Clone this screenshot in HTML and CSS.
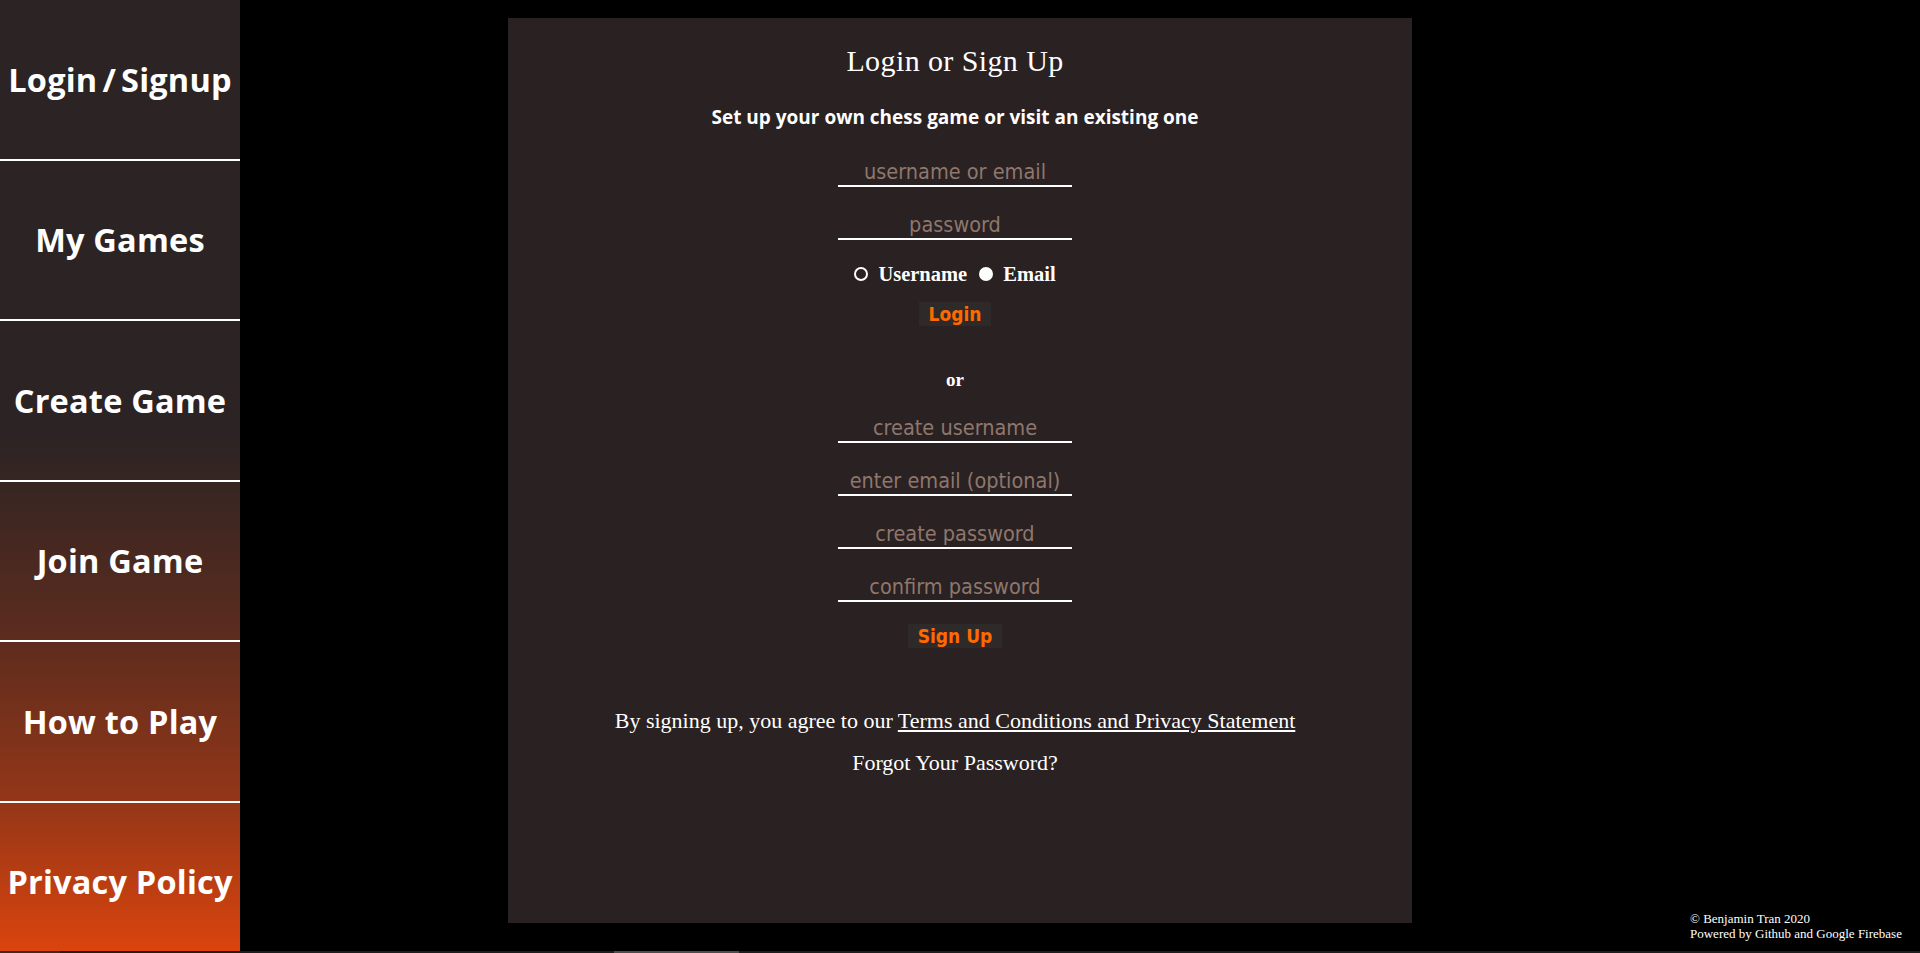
FILE: index.html
```html
<!DOCTYPE html>
<html lang="en">
<head>
<meta charset="utf-8">
<title>Login or Sign Up</title>
<link rel="stylesheet" href="styles.css">
</head>
<body>
<div class="page">
  <nav class="sidebar">
    <a class="nav-item" href="#">Login<span class="slash">/</span>Signup</a>
    <a class="nav-item" href="#">My Games</a>
    <a class="nav-item" href="#">Create Game</a>
    <a class="nav-item" href="#">Join Game</a>
    <a class="nav-item" href="#">How to Play</a>
    <a class="nav-item" href="#">Privacy Policy</a>
  </nav>
  <main class="main">
    <section class="panel">
      <h1 class="title">Login or Sign Up</h1>
      <p class="subtitle">Set up your own chess game or visit an existing one</p>
      <input class="field first" type="text" placeholder="username or email">
      <input class="field" type="password" placeholder="password">
      <div class="radios">
        <label class="radio"><input type="radio" name="mode"><span>Username</span></label>
        <label class="radio"><input type="radio" name="mode" checked><span>Email</span></label>
      </div>
      <button class="btn btn-login">Login</button>
      <p class="or">or</p>
      <input class="field first-signup" type="text" placeholder="create username">
      <input class="field" type="text" placeholder="enter email (optional)">
      <input class="field" type="password" placeholder="create password">
      <input class="field" type="password" placeholder="confirm password">
      <button class="btn btn-signup">Sign Up</button>
      <p class="terms">By signing up, you agree to our <a href="#">Terms and Conditions and Privacy Statement</a></p>
      <p class="forgot">Forgot Your Password?</p>
    </section>
    <footer class="footer">
      <div>© Benjamin Tran 2020</div>
      <div>Powered by Github and Google Firebase</div>
    </footer>
  </main>
</div>
<div class="hscroll"><div class="hscroll-left"></div><div class="hscroll-thumb"></div></div>
</body>
</html>
```

FILE: styles.css
```css
html, body {
  margin: 0;
  padding: 0;
  background: #000;
  height: 953px;
  overflow: hidden;
}

body {
  display: flex;
  flex-direction: column;
  font-family: "Liberation Serif", serif;
  color: #fff;
}

.page {
  height: 951px;
  display: flex;
  flex-direction: row;
}

.sidebar {
  width: 240px;
  flex: 0 0 240px;
  height: 951px;
  overflow: hidden;
  display: flex;
  flex-direction: column;
  background: linear-gradient(to bottom, #2b2324 0%, #2b2324 45%, #5c2c1e 66%, #933618 83%, #e0450c 100%);
  background-size: 100% 963px;
}

.nav-item {
  flex: 0 0 158.5px;
  height: 158.5px;
  border-bottom: 2px solid #fff;
  display: flex;
  align-items: center;
  justify-content: center;
  color: #fff;
  text-decoration: none;
  font-family: "Open Sans", sans-serif;
  font-weight: 700;
  font-size: 32.5px;
  letter-spacing: 0.2px;
  white-space: nowrap;
}

.slash {
  padding: 0 5px;
}

.main {
  flex: 1;
  display: flex;
  flex-direction: row;
  padding-left: 268px;
}

.panel {
  width: 894px;
  height: 905px;
  margin-top: 18px;
  padding-right: 10px;
  background: #2a2122;
  display: flex;
  flex-direction: column;
  align-items: center;
}

.title {
  margin: 25px 0 0;
  font-family: "Liberation Serif", serif;
  font-weight: 400;
  font-size: 30px;
  line-height: 36px;
  letter-spacing: 0.4px;
}

.subtitle {
  margin: 27px 0 0;
  font-family: "Open Sans", sans-serif;
  font-weight: 700;
  font-size: 19px;
  line-height: 22px;
}

.field {
  box-sizing: border-box;
  width: 234px;
  height: 34px;
  margin: 19px 0 0;
  padding: 4px 0 0;
  border: none;
  border-bottom: 2px solid #fff;
  background: transparent;
  outline: none;
  text-align: center;
  color: #fff;
  font-family: "DejaVu Sans Condensed", "DejaVu Sans", sans-serif;
  font-size: 21.5px;
}

.field::placeholder {
  color: #8e776c;
  opacity: 1;
}

.field.first {
  margin-top: 25px;
}

.field.first-signup {
  margin-top: 18px;
}

.radios {
  margin-top: 23px;
  height: 22px;
  display: flex;
  align-items: center;
  gap: 12px;
}

.radio {
  display: flex;
  align-items: center;
  gap: 10px;
  font-family: "Liberation Serif", serif;
  font-weight: 700;
  font-size: 20.5px;
  line-height: 22px;
}

.radio input {
  appearance: none;
  -webkit-appearance: none;
  margin: 0;
  box-sizing: border-box;
  width: 14px;
  height: 14px;
  border: 2px solid #fff;
  border-radius: 50%;
  background: transparent;
}

.radio input:checked {
  background: #fff;
}

.btn {
  border: none;
  background: #2f2a2a;
  color: #ff6a00;
  font-family: "DejaVu Sans Condensed", "DejaVu Sans", sans-serif;
  font-weight: 700;
  font-size: 19px;
  height: 24px;
  line-height: 24px;
  padding: 0 10px;
  cursor: pointer;
}

.btn-login {
  margin-top: 17px;
}

.or {
  margin: 43px 0 0;
  font-family: "Liberation Serif", serif;
  font-weight: 700;
  font-size: 19px;
  line-height: 22px;
}

.btn-signup {
  margin-top: 22px;
}

.terms {
  margin: 61px 0 0;
  font-family: "Liberation Serif", serif;
  font-size: 22px;
  line-height: 24px;
}

.terms a {
  color: #fff;
  text-decoration: underline;
}

.forgot {
  margin: 18px 0 0;
  font-family: "Liberation Serif", serif;
  font-size: 22px;
  line-height: 24px;
}

.footer {
  align-self: flex-end;
  margin: 0 0 10px 278px;
  font-family: "Liberation Serif", serif;
  font-size: 13px;
  line-height: 15px;
  white-space: nowrap;
}

.hscroll {
  height: 2px;
  background: #1e1e1e;
  display: flex;
}

.hscroll-left {
  width: 60px;
  background: #3a2a22;
}

.hscroll-thumb {
  margin-left: 554px;
  width: 125px;
  background: #4d4d4d;
}
```
